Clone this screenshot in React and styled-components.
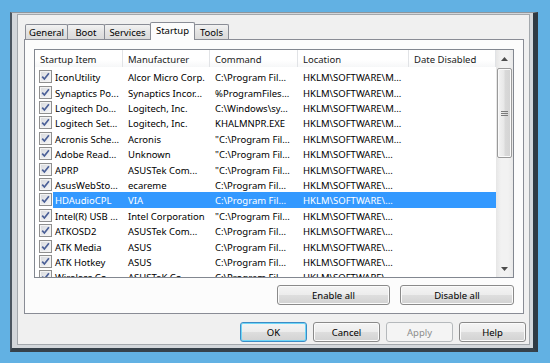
import React from 'react';
import styled, { createGlobalStyle, css } from 'styled-components';

const Global = createGlobalStyle`
  html, body { margin: 0; padding: 0; }
  body {
    background: #62b1e3;
    width: 550px;
    height: 363px;
    overflow: hidden;
    font-family: "Noto Sans", "Open Sans", sans-serif;
    font-size: 9.5px;
    color: #000;
  }
  * { box-sizing: border-box; }
`;

const Frame = styled.div`
  margin: 12px 0 0 10px;
  width: 528px;
  height: 340px;
  border-top: 1px solid #8e969d;
  border-left: 2px solid #4b5661;
  border-right: 5px solid #2f3a43;
  border-bottom: 4px solid #36414a;
  padding: 1px 3px 3px 5px;
  background: #d3d7db;
  display: flex;
`;

const Client = styled.div`
  flex: 1;
  border: 1px solid #a3a8ad;
  background: #f0f0f0;
  display: flex;
  flex-direction: column;
  padding: 7px 0 0 6px;
`;

const TabStrip = styled.div`
  display: flex;
  align-items: flex-end;
  height: 18px;
  margin-bottom: -1px;
  padding-left: 2px;
  position: relative;
  z-index: 1;
`;

const Tab = styled.div`
  width: ${p => p.$w}px;
  margin-left: -1px;
  border: 1px solid #898c95;
  border-bottom: none;
  display: flex;
  align-items: center;
  justify-content: center;
  white-space: nowrap;
  border-radius: 2px 2px 0 0;
  ${p => p.$active ? css`
    height: 18px;
    background: #fcfcfc;
    padding-bottom: 2px;
  ` : css`
    height: 15px;
    margin-bottom: 1px;
    background: linear-gradient(#f2f2f2, #e3e3e3 50%, #dadada);
  `}
`;

const Panel = styled.div`
  width: 500px;
  height: 275px;
  border: 1px solid #898c95;
  background: #fcfcfc;
  padding: 9px 9px 8px 9px;
  display: flex;
  flex-direction: column;
`;

const ListView = styled.div`
  width: 480px;
  height: 229px;
  border: 1px solid #828790;
  background: #fff;
  display: flex;
  overflow: hidden;
`;

const Main = styled.div`
  width: 461px;
  display: flex;
  flex-direction: column;
  overflow: hidden;
`;

const Header = styled.div`
  display: flex;
  height: 17px;
  flex: none;
  background: linear-gradient(#ffffff, #ffffff 60%, #f6f7f8);
`;

const HeaderCell = styled.div`
  width: ${p => p.$w}px;
  height: 17px;
  flex: none;
  padding: 2px 0 0 5px;
  line-height: 15px;
  border-right: 1px solid #e1e3e6;
  white-space: nowrap;
  overflow: hidden;
  color: #1a1a1a;
`;

const Rows = styled.div`
  padding-top: 2px;
  display: flex;
  flex-direction: column;
`;

const Row = styled.div`
  display: flex;
  align-items: center;
  height: 15.42px;
  flex: none;
`;

const CheckArea = styled.div`
  width: 18px;
  flex: none;
  padding-left: 4px;
  display: flex;
  align-items: center;
`;

const CheckBox = styled.div`
  width: 13px;
  height: 13px;
  border: 1px solid #8f8f8f;
  background: linear-gradient(135deg, #d6d8dc, #f8f8f9);
  box-shadow: inset 0 0 0 1px #f3f3f3;
  display: flex;
  align-items: center;
  justify-content: center;
`;

const RowBody = styled.div`
  flex: 1;
  height: 100%;
  display: flex;
  align-items: center;
  background: ${p => (p.$sel ? '#3399ff' : 'transparent')};
  color: ${p => (p.$sel ? '#fff' : '#000')};
`;

const Cell = styled.div`
  width: ${p => p.$w}px;
  flex: none;
  padding-left: ${p => p.$pad}px;
  padding-top: 2px;
  white-space: nowrap;
  overflow: hidden;
`;

const ScrollBar = styled.div`
  width: 17px;
  flex: none;
  display: flex;
  flex-direction: column;
  background: linear-gradient(to right, #e6e6e6, #f2f2f2 30%, #f2f2f2 70%, #e9e9e9);
`;

const ScrollButton = styled.div`
  height: 17px;
  flex: none;
  display: flex;
  align-items: center;
  justify-content: center;
  margin-top: ${p => (p.$down ? 'auto' : '0')};
`;

const Thumb = styled.div`
  height: 90px;
  margin: 1px 1px 0 1px;
  border: 1px solid #9a9a9a;
  border-radius: 2px;
  background: linear-gradient(to right, #f3f3f3, #e8e8e8 45%, #d9d9d9 55%, #d3d3d3);
  box-shadow: inset 0 0 0 1px #fafafa;
  display: flex;
  align-items: center;
  justify-content: center;
`;

const ButtonRow = styled.div`
  display: flex;
  justify-content: flex-end;
  gap: ${p => p.$gap}px;
  margin-top: ${p => p.$mt}px;
  padding-right: ${p => p.$pr || 0}px;
`;

const Button = styled.div`
  width: ${p => p.$w}px;
  height: 20px;
  border-radius: 3px;
  display: flex;
  align-items: center;
  justify-content: center;
  white-space: nowrap;
  border: 1px solid #8a8a8a;
  background: linear-gradient(#f4f4f4, #ececec 50%, #dedede 50%, #d2d2d2);
  box-shadow: inset 0 0 0 1px #fbfbfb;
  color: #000;
  ${p => p.$default && css`
    border-color: #3c8cc6;
    box-shadow: inset 0 0 0 1px #6fd6f7;
  `}
  ${p => p.$disabled && css`
    border-color: #b5b9bc;
    background: #f4f4f4;
    box-shadow: none;
    color: #8c8c8c;
  `}
`;

const columns = [
  { title: 'Startup Item', w: 88 },
  { title: 'Manufacturer', w: 87 },
  { title: 'Command', w: 88 },
  { title: 'Location', w: 111 },
  { title: 'Date Disabled', w: 87 },
];

const rows = [
  ['IconUtility', 'Alcor Micro Corp.', 'C:\\Program Fil...', 'HKLM\\SOFTWARE\\M...'],
  ['Synaptics Po...', 'Synaptics Incor...', '%ProgramFiles...', 'HKLM\\SOFTWARE\\M...'],
  ['Logitech Do...', 'Logitech, Inc.', 'C:\\Windows\\sy...', 'HKLM\\SOFTWARE\\M...'],
  ['Logitech Set...', 'Logitech, Inc.', 'KHALMNPR.EXE', 'HKLM\\SOFTWARE\\M...'],
  ['Acronis Sche...', 'Acronis', '"C:\\Program Fil...', 'HKLM\\SOFTWARE\\M...'],
  ['Adobe Read...', 'Unknown', '"C:\\Program Fil...', 'HKLM\\SOFTWARE\\...'],
  ['APRP', 'ASUSTek Com...', '"C:\\Program Fil...', 'HKLM\\SOFTWARE\\...'],
  ['AsusWebSto...', 'ecareme', 'C:\\Program Fil...', 'HKLM\\SOFTWARE\\...'],
  ['HDAudioCPL', 'VIA', 'C:\\Program Fil...', 'HKLM\\SOFTWARE\\...'],
  ['Intel(R) USB ...', 'Intel Corporation', '"C:\\Program Fil...', 'HKLM\\SOFTWARE\\...'],
  ['ATKOSD2', 'ASUSTek Com...', 'C:\\Program Fil...', 'HKLM\\SOFTWARE\\...'],
  ['ATK Media', 'ASUS', 'C:\\Program Fil...', 'HKLM\\SOFTWARE\\...'],
  ['ATK Hotkey', 'ASUS', 'C:\\Program Fil...', 'HKLM\\SOFTWARE\\...'],
  ['Wireless Co...', 'ASUSTeK Co...', 'C:\\Program Fil...', 'HKLM\\SOFTWARE\\...'],
];

const tabs = [
  { label: 'General', w: 43 },
  { label: 'Boot', w: 38 },
  { label: 'Services', w: 47 },
  { label: 'Startup', w: 45, active: true },
  { label: 'Tools', w: 35 },
];

const Check = () => (
  <svg width="9" height="9" viewBox="0 0 9 9">
    <path d="M1.2 4.6 L3.4 7 L7.9 1.3" fill="none" stroke="#4a5f97" strokeWidth="1.7" />
  </svg>
);

const Arrow = ({ down }) => (
  <svg width="7" height="4" viewBox="0 0 7 4">
    <path d={down ? 'M0 0 H7 L3.5 4 Z' : 'M0 4 H7 L3.5 0 Z'} fill="#4d4d4d" />
  </svg>
);

const Grip = () => (
  <svg width="7" height="5" viewBox="0 0 7 5">
    <path d="M0 0.5 H7 M0 2.5 H7 M0 4.5 H7" stroke="#7a7a7a" strokeWidth="1" />
  </svg>
);

export default function App() {
  return (
    <>
      <Global />
      <Frame>
        <Client>
          <TabStrip>
            {tabs.map(t => (
              <Tab key={t.label} $w={t.w} $active={t.active}>{t.label}</Tab>
            ))}
          </TabStrip>
          <Panel>
            <ListView>
              <Main>
                <Header>
                  {columns.map(c => (
                    <HeaderCell key={c.title} $w={c.w}>{c.title}</HeaderCell>
                  ))}
                </Header>
                <Rows>
                  {rows.map((r, i) => (
                    <Row key={i}>
                      <CheckArea>
                        <CheckBox><Check /></CheckBox>
                      </CheckArea>
                      <RowBody $sel={i === 8}>
                        <Cell $w={70} $pad={2}>{r[0]}</Cell>
                        <Cell $w={87} $pad={5}>{r[1]}</Cell>
                        <Cell $w={88} $pad={5}>{r[2]}</Cell>
                        <Cell $w={111} $pad={5}>{r[3]}</Cell>
                        <Cell $w={87} $pad={5}></Cell>
                      </RowBody>
                    </Row>
                  ))}
                </Rows>
              </Main>
              <ScrollBar>
                <ScrollButton><Arrow /></ScrollButton>
                <Thumb><Grip /></Thumb>
                <ScrollButton $down><Arrow down /></ScrollButton>
              </ScrollBar>
            </ListView>
            <ButtonRow $gap={10} $mt={7}>
              <Button $w={113}>Enable all</Button>
              <Button $w={114}>Disable all</Button>
            </ButtonRow>
          </Panel>
          <ButtonRow $gap={6} $mt={8} $pr={3}>
            <Button $w={67} $default>OK</Button>
            <Button $w={67}>Cancel</Button>
            <Button $w={67} $disabled>Apply</Button>
            <Button $w={67}>Help</Button>
          </ButtonRow>
        </Client>
      </Frame>
    </>
  );
}
